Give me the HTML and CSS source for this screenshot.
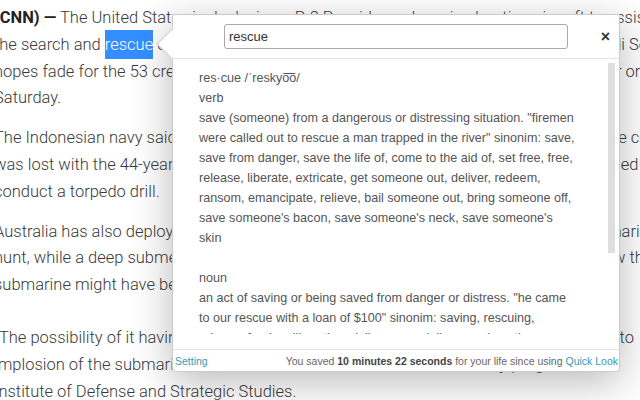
FILE: index.html
```html
<!DOCTYPE html>
<html lang="en">
<head>
    <meta charset="UTF-8">
    <meta name="viewport" content="width=device-width, initial-scale=1.0">
    <title>Quick Look</title>
    <link rel="stylesheet" href="styles.css">
</head>
<body>
    <div class="article">
        <p>
            <span class="ln"><b>(CNN) &mdash;</b> The United States is deploying a P-8 Poseidon submarine hunting aircraft to assist in</span>
            <span class="ln">the search and <span class="sel">rescue</span> operations for the missing naval submarine that vanished off Bali Sea</span>
            <span class="ln">hopes fade for the 53 crew members aboard, with oxygen supplies likely to run out later on</span>
            <span class="ln">Saturday.</span>
        </p>
        <p>
            <span class="ln">The Indonesian navy said the KRI Nanggala-402 was participating in an exercise and the contact</span>
            <span class="ln">was lost with the 44-year-old vessel soon after it was cleared to dive and it was scheduled to</span>
            <span class="ln">conduct a torpedo drill.</span>
        </p>
        <p>
            <span class="ln">Australia has also deployed warships, HMAS Ballarat and HMAS Sirius, to join the submarine</span>
            <span class="ln">hunt, while a deep submergence rescue craft could soon be used to help determine how the</span>
            <span class="ln">submarine might have been damaged during the dive.</span>
        </p>
        <p class="quote">
            <span class="ln">&ldquo;The possibility of it having sunk to 500 meters raises the risk of the hull failing, leading to</span>
            <span class="ln">implosion of the submarine,&rdquo; said Collin Koh, research fellow in the navy program at</span>
            <span class="ln">Institute of Defense and Strategic Studies.</span>
        </p>
    </div>

    <div class="look">
        <div class="look-head">
            <input class="look-input" type="text" value="rescue">
            <span class="look-close">&times;</span>
        </div>
        <div class="look-body">
            <div class="look-text">
                <div class="sense">
                    <div>res&middot;cue /&#712;resky&#8203;o&#862;o/</div>
                    <div>verb</div>
                    <div>save (someone) from a dangerous or distressing situation. "firemen were called out to rescue a man trapped in the river" sinonim: save, save from danger, save the life of, come to the aid of, set free, free, release, liberate, extricate, get someone out, deliver, redeem, ransom, emancipate, relieve, bail someone out, bring someone off, save someone's bacon, save someone's neck, save someone's skin</div>
                </div>
                <div class="sense">
                    <div>noun</div>
                    <div>an act of saving or being saved from danger or distress. "he came to our rescue with a loan of $100" sinonim: saving, rescuing, release, freeing, liberation, deliverance, delivery, redemption, ransom, salvation, relief, help, aid, assistance, escape, extrication, recovery, salvage, emancipation, bailout</div>
                </div>
            </div>
            <div class="look-bar">
                <div class="look-thumb"></div>
            </div>
        </div>
        <div class="look-foot">
            <a class="look-link" href="#">Setting</a>
            <span>You saved <b>10 minutes 22 seconds</b> for your life since using <a class="look-link" href="#">Quick Look</a></span>
        </div>
    </div>
</body>
</html>
```

FILE: styles.css
```css
html, body{
    margin: 0;
    padding: 0;
}
body{
    width: 640px;
    height: 400px;
    overflow: hidden;
    position: relative;
    background-color: #fff;
}

/* article underneath */
.article{
    margin-left: -6px;
    padding-top: 5px;
    font-family: Roboto, "Liberation Sans", sans-serif;
    font-size: 16.5px;
    font-weight: 300;
    line-height: 26.8px;
    color: #3a3a3a;
}
.article p{
    margin: 0 0 13px;
}
.article p.quote{
    margin-top: 26px;
}
.ln{
    display: block;
    white-space: nowrap;
}
.article b{
    font-weight: 700;
    color: #222;
}
.sel{
    background-color: #338fff;
    color: #fff;
    padding: 5px 0;
}

/* quick look popup */
.look{
    position: absolute;
    left: 172px;
    top: 14px;
    width: 446px;
    height: 356px;
    display: flex;
    flex-direction: column;
    background-color: #fff;
    border: 1px solid #cbcbcb;
    border-radius: 0 0 4px 4px;
    box-shadow: 0 10px 40px rgba(0,0,0,0.28);
    font-family: "Liberation Sans", Arial, sans-serif;
}
.look::before{
    content: '';
    position: absolute;
    left: -12px;
    top: 18px;
    width: 22px;
    height: 22px;
    box-sizing: border-box;
    background-color: #fff;
    border-left: 1px solid #cbcbcb;
    border-bottom: 1px solid #cbcbcb;
    transform: rotate(45deg);
}
.look-head{
    height: 43px;
    flex: none;
    display: grid;
    grid-template-columns: 1fr 344px 1fr;
    align-items: center;
    border-bottom: 1px solid #e4e4e4;
    position: relative;
}
.look-input{
    grid-column: 2;
    height: 25px;
    box-sizing: border-box;
    margin: 0;
    padding: 0 4px;
    border: 1px solid #a9a9a9;
    border-radius: 3px;
    font-family: "Liberation Sans", Arial, sans-serif;
    font-size: 13px;
    color: #333;
    outline: none;
}
.look-close{
    grid-column: 3;
    justify-self: end;
    margin-right: 9px;
    font-size: 16px;
    font-weight: 700;
    color: #333;
    line-height: 1;
}
.look-body{
    flex: 1;
    min-height: 0;
    display: flex;
    margin: 0 4px 15px 0;
}
.look-text{
    flex: 1;
    overflow: hidden;
    padding: 9px 30px 0 26px;
    font-size: 12.6px;
    line-height: 20px;
    color: #555;
}
.look-bar{
    width: 7px;
    padding-top: 4px;
}
.look-thumb{
    height: 190px;
    background-color: #dedede;
}
.sense{
    margin-bottom: 20px;
}
.look-foot{
    height: 21px;
    flex: none;
    display: flex;
    justify-content: space-between;
    align-items: center;
    padding: 0 1px 0 2px;
    border-top: 1px solid #e4e4e4;
    font-size: 10.5px;
    color: #666;
}
.look-foot b{
    color: #444;
}
.look-link{
    color: #3a98b5;
    text-decoration: none;
}
```
